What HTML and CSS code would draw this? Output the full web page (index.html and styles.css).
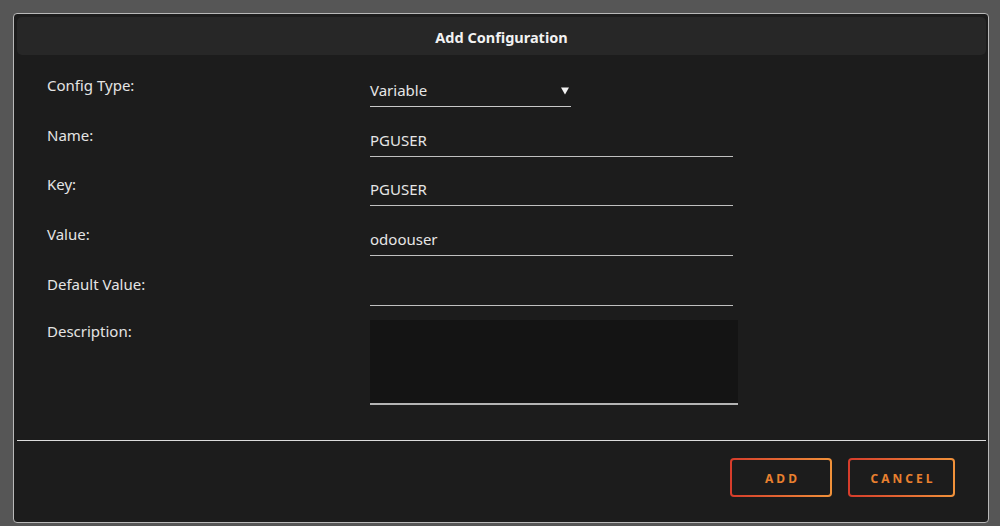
FILE: index.html
```html
<!DOCTYPE html>
<html lang="en">
<head>
    <meta charset="UTF-8">
    <title>Add Configuration</title>
    <link rel="stylesheet" href="styles.css">
</head>
<body>
<div class="dialog">
    <header class="dialog_head">Add Configuration</header>

    <!--表单-->
    <section class="form">
        <div class="row">
            <label class="label">Config Type:</label>
            <div class="select">
                <span>Variable</span>
                <svg class="arrow" width="8" height="8" viewBox="0 0 8 8"><path d="M0 0.5 H8 L4 7.5 Z" fill="#f2f2f2"/></svg>
            </div>
        </div>
        <div class="row">
            <label class="label">Name:</label>
            <input class="field" type="text" value="PGUSER">
        </div>
        <div class="row">
            <label class="label">Key:</label>
            <input class="field" type="text" value="PGUSER">
        </div>
        <div class="row">
            <label class="label">Value:</label>
            <input class="field" type="text" value="odoouser">
        </div>
        <div class="row">
            <label class="label">Default Value:</label>
            <input class="field" type="text" value="">
        </div>
        <div class="row row_desc">
            <label class="label">Description:</label>
            <textarea class="desc"></textarea>
        </div>
    </section>

    <!--底部按钮-->
    <footer class="dialog_foot">
        <button class="btn btn_add">ADD</button>
        <button class="btn btn_cancel">CANCEL</button>
    </footer>
</div>
</body>
</html>
```

FILE: styles.css
```css
*{
    margin: 0;
    padding: 0;
    box-sizing: border-box;
}
body{
    background-color: #565656;
    font-family: "Noto Sans", "Open Sans", sans-serif;
    font-size: 15px;
    color: #e6e6e6;
    padding: 13px 11px 3px 13px;
}
.dialog{
    width: 976px;
    height: 510px;
    background-color: #1c1c1c;
    border: 1px solid #b9b9b9;
    border-radius: 4px;
    display: flex;
    flex-direction: column;
}
.dialog_head{
    margin: 3px 2px 0 3px;
    height: 38px;
    padding-top: 2px;
    line-height: 36px;
    text-align: center;
    font-size: 14.5px;
    font-weight: bold;
    color: #f2f2f2;
    background-color: #272727;
    border-radius: 5px;
}
.form{
    padding: 15px 0 0 30px;
    height: 386px;
    border-bottom: 1px solid #dcdcdc;
    margin: 0 2px 0 3px;
}
.row{
    display: grid;
    grid-template-columns: 323px 1fr;
    height: 49.7px;
    align-items: start;
}
.label{
    padding-top: 5px;
    line-height: 20px;
    color: #e4e4e4;
}
.select{
    width: 201px;
    height: 37px;
    padding-top: 4px;
    display: flex;
    align-items: center;
    justify-content: space-between;
    border-bottom: 1px solid #c8c8c8;
    color: #e6e6e6;
}
.arrow{
    margin-right: 2px;
    margin-top: 1px;
}
.field{
    width: 363px;
    height: 37px;
    padding-top: 4px;
    background: transparent;
    border: none;
    border-bottom: 1px solid #c0c0c0;
    font-family: inherit;
    font-size: 15px;
    color: #e6e6e6;
    outline: none;
}
.row_desc .label{
    padding-top: 3px;
}
.desc{
    width: 368px;
    height: 85px;
    margin-top: 2px;
    background-color: #141414;
    border: none;
    border-bottom: 2px solid #b4b4b4;
    resize: none;
    outline: none;
}
.dialog_foot{
    flex: 1;
    display: flex;
    justify-content: flex-end;
    align-items: flex-start;
    gap: 16px;
    padding: 17px 33px 0 0;
}
.btn{
    height: 39px;
    border: 2px solid transparent;
    border-radius: 4px;
    background: linear-gradient(#1c1c1c, #1c1c1c) padding-box,
                linear-gradient(to right, #d63c2b, #f1923a) border-box;
    font-family: inherit;
    font-size: 12px;
    font-weight: bold;
    letter-spacing: 3px;
    color: #e9802f;
    padding: 1px 0 0 3px;
}
.btn_add{
    width: 102px;
}
.btn_cancel{
    width: 107px;
}
```
